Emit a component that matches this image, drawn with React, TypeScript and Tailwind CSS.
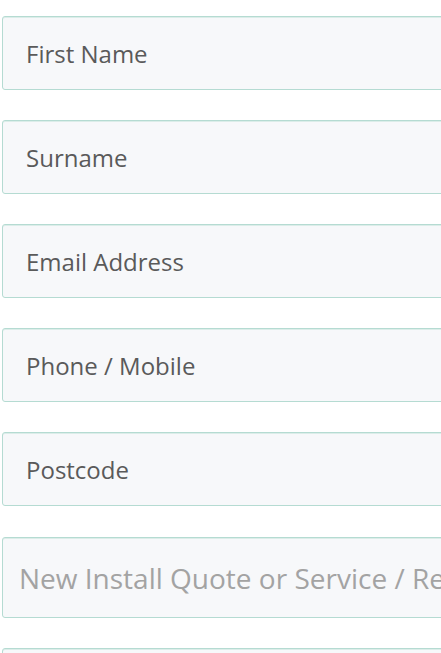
export default function App() {
  const fields = ['First Name', 'Surname', 'Email Address', 'Phone / Mobile', 'Postcode']
  return (
    <div className="w-[441px] h-[653px] overflow-hidden bg-white" style={{ fontFamily: '"Open Sans", sans-serif' }}>
      <div className="flex flex-col gap-[30px] pt-[16px] pl-[2px] w-[700px]">
        {fields.map((f) => (
          <div
            key={f}
            className="h-[74px] flex items-center pl-[23px] pt-[2px] rounded-[3px] border border-[#b5dbd2] bg-[#f7f8fa] shadow-[inset_0_1px_0_#dcede9] text-[24px] text-[#5a5a5a]"
          >
            {f}
          </div>
        ))}
        <div className="h-[81px] mt-[1px] flex items-center pl-[16px] rounded-[3px] border border-[#b5dbd2] bg-[#f7f8fa] shadow-[inset_0_1px_0_#dcede9] text-[28px] text-[#a3a3a3] whitespace-nowrap">
          New Install Quote or Service / Repair
        </div>
        <div className="h-[74px] rounded-[3px] border border-[#b5dbd2] bg-[#f7f8fa] shadow-[inset_0_1px_0_#dcede9]" />
      </div>
    </div>
  )
}
